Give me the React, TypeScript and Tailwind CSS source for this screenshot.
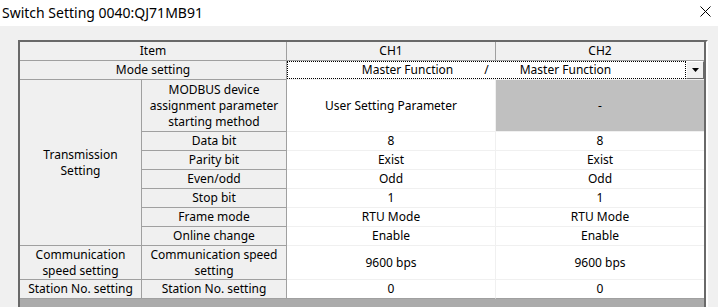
import React from "react";

const H = "bg-[#f0f0f0] border-r border-b border-[#a0a0a0] flex items-center justify-center text-center leading-[16px]";
const D = "bg-white border-b border-[#f0f0f0] flex items-center justify-center text-center";
const D1 = D + " border-r";

const rows: [string, string, string][] = [
  ["Data bit", "8", "8"],
  ["Parity bit", "Exist", "Exist"],
  ["Even/odd", "Odd", "Odd"],
  ["Stop bit", "1", "1"],
  ["Frame mode", "RTU Mode", "RTU Mode"],
  ["Online change", "Enable", "Enable"],
];

export default function App() {
  return (
    <div
      className="w-[718px] h-[307px] bg-[#f0f0f0] overflow-hidden text-black"
      style={{ fontFamily: '"Noto Sans", sans-serif' }}
    >
      <div className="h-[26px] bg-white flex items-center justify-between pl-[2px] pr-[7px]">
        <span className="text-[14px] leading-none">Switch Setting 0040:QJ71MB91</span>
        <svg width="11" height="11" viewBox="0 0 11 11" className="mb-[4px]">
          <path d="M0.5 0.5 L10.5 10.5 M10.5 0.5 L0.5 10.5" stroke="#000" strokeWidth="1" fill="none" />
        </svg>
      </div>
      <div className="mt-[14px] ml-[18px] w-[690px] border-l-2 border-t-2 border-[#696969] border-r-2 border-r-white">
        <div className="border-r-2 border-[#696969]">
          <div className="grid grid-cols-[122px_145px_209px_208px] grid-rows-[19px_19px_52px_19px_19px_19px_19px_19px_19px_34px_19px] text-[12px]">
            <div className={H + " col-span-2"}>Item</div>
            <div className={H}>CH1</div>
            <div className="bg-[#f0f0f0] border-b border-[#a0a0a0] flex items-center justify-center">CH2</div>

            <div className={H + " col-span-2"}>Mode setting</div>
            <div className="col-span-2 bg-white border-b border-[#f0f0f0] flex">
              <div className="flex-1 h-[18px] border border-dotted border-black flex items-center justify-center gap-[31px]">
                <span>Master Function</span>
                <span>/</span>
                <span>Master Function</span>
              </div>
              <div className="w-[18px] h-[18px] bg-[#f0f0f0] border-t border-l border-t-white border-l-white border-r border-b border-r-[#696969] border-b-[#696969] flex items-center justify-center">
                <svg width="7" height="4" viewBox="0 0 7 4">
                  <path d="M0 0 H7 L3.5 4 Z" fill="#000" />
                </svg>
              </div>
            </div>

            <div className={H + " row-span-7"}>
              Transmission
              <br />
              Setting
            </div>
            <div className={H}>
              MODBUS device
              <br />
              assignment parameter
              <br />
              starting method
            </div>
            <div className={D1}>User Setting Parameter</div>
            <div className="bg-[#c0c0c0] border-b border-[#f0f0f0] flex items-center justify-center">-</div>

            {rows.map(([a, b, c]) => (
              <React.Fragment key={a}>
                <div className={H}>{a}</div>
                <div className={D1}>{b}</div>
                <div className={D}>{c}</div>
              </React.Fragment>
            ))}

            <div className={H}>
              Communication
              <br />
              speed setting
            </div>
            <div className={H}>
              Communication speed
              <br />
              setting
            </div>
            <div className={D1}>9600 bps</div>
            <div className={D}>9600 bps</div>

            <div className={H}>Station No. setting</div>
            <div className={H}>Station No. setting</div>
            <div className="bg-white border-b border-r border-[#a0a0a0] border-r-[#f0f0f0] flex items-center justify-center">0</div>
            <div className="bg-white border-b border-[#a0a0a0] flex items-center justify-center">0</div>
          </div>
          <div className="h-[20px] bg-[#ababab]" />
        </div>
      </div>
    </div>
  );
}
